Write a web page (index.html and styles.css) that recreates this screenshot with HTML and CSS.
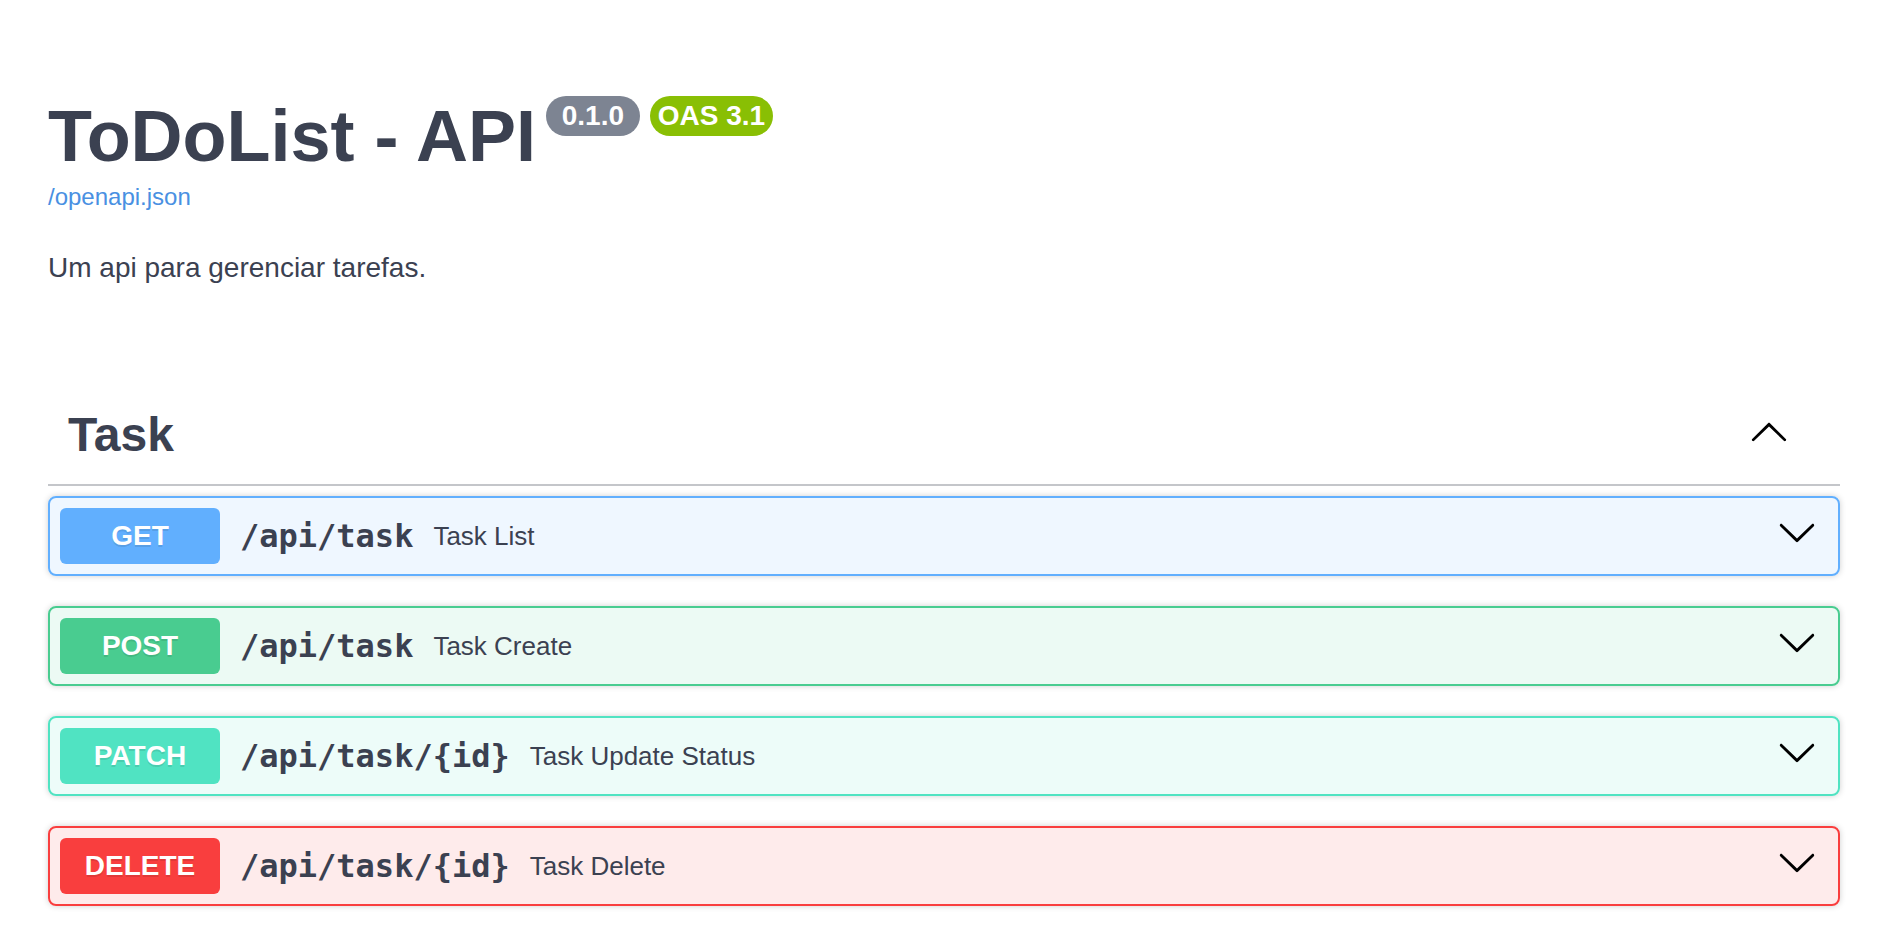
FILE: index.html
```html
<!DOCTYPE html>
<html lang="pt">
<head>
<meta charset="utf-8">
<title>ToDoList - API - Swagger UI</title>
<link rel="stylesheet" href="styles.css">
</head>
<body>
<div class="swagger-ui">
  <div class="wrapper">
    <section class="info">
      <hgroup class="main">
        <h2 class="title">
          <span class="title-text">ToDoList - API</span>
          <small class="badge"><pre class="version"> 0.1.0 </pre></small>
          <small class="badge version-stamp"><pre class="version">OAS 3.1</pre></small>
        </h2>
        <a class="spec-link" href="#">/openapi.json</a>
      </hgroup>
      <div class="description"><p>Um api para gerenciar tarefas.</p></div>
    </section>

    <section class="tag-section">
      <h3 class="opblock-tag">
        <span class="tag-name">Task</span>
        <button class="expand-operation" aria-label="Collapse operation">
          <svg class="arrow" width="40" height="40" viewBox="0 0 20 20" aria-hidden="true"><path d="M17.418 14.908c.272.268.709.268.979 0s.271-.701 0-.969l-7.908-7.83c-.27-.268-.707-.268-.979 0l-7.908 7.83c-.27.268-.27.701 0 .969.271.268.709.268.979 0L10 7.767l7.418 7.141z"/></svg>
        </button>
      </h3>

      <div class="opblock opblock-get">
        <div class="opblock-summary">
          <span class="method">GET</span>
          <span class="path">/api/task</span>
          <span class="summary-desc">Task List</span>
          <button class="arrow-btn" aria-label="Expand"><svg class="arrow" width="40" height="40" viewBox="0 0 20 20" aria-hidden="true"><path d="M17.418 6.109c.272-.268.709-.268.979 0s.271.701 0 .969l-7.908 7.83c-.27.268-.707.268-.979 0l-7.908-7.830c-.27-.268-.27-.701 0-.969.271-.268.709-.268.979 0L10 13.25l7.418-7.141z"/></svg></button>
        </div>
      </div>

      <div class="opblock opblock-post">
        <div class="opblock-summary">
          <span class="method">POST</span>
          <span class="path">/api/task</span>
          <span class="summary-desc">Task Create</span>
          <button class="arrow-btn" aria-label="Expand"><svg class="arrow" width="40" height="40" viewBox="0 0 20 20" aria-hidden="true"><path d="M17.418 6.109c.272-.268.709-.268.979 0s.271.701 0 .969l-7.908 7.83c-.27.268-.707.268-.979 0l-7.908-7.83c-.27-.268-.27-.701 0-.969.271-.268.709-.268.979 0L10 13.25l7.418-7.141z"/></svg></button>
        </div>
      </div>

      <div class="opblock opblock-patch">
        <div class="opblock-summary">
          <span class="method">PATCH</span>
          <span class="path">/api/task/{id}</span>
          <span class="summary-desc">Task Update Status</span>
          <button class="arrow-btn" aria-label="Expand"><svg class="arrow" width="40" height="40" viewBox="0 0 20 20" aria-hidden="true"><path d="M17.418 6.109c.272-.268.709-.268.979 0s.271.701 0 .969l-7.908 7.83c-.27.268-.707.268-.979 0l-7.908-7.83c-.27-.268-.27-.701 0-.969.271-.268.709-.268.979 0L10 13.25l7.418-7.141z"/></svg></button>
        </div>
      </div>

      <div class="opblock opblock-delete">
        <div class="opblock-summary">
          <span class="method">DELETE</span>
          <span class="path">/api/task/{id}</span>
          <span class="summary-desc">Task Delete</span>
          <button class="arrow-btn" aria-label="Expand"><svg class="arrow" width="40" height="40" viewBox="0 0 20 20" aria-hidden="true"><path d="M17.418 6.109c.272-.268.709-.268.979 0s.271.701 0 .969l-7.908 7.83c-.27.268-.707.268-.979 0l-7.908-7.83c-.27-.268-.27-.701 0-.969.271-.268.709-.268.979 0L10 13.25l7.418-7.141z"/></svg></button>
        </div>
      </div>
    </section>
  </div>
</div>
</body>
</html>
```

FILE: styles.css
```css
* {
  box-sizing: border-box;
}

html,
body {
  margin: 0;
  background: #fff;
}

body {
  font-family: "Liberation Sans", Arial, sans-serif;
  color: #3b4151;
}

.wrapper {
  padding: 0 57px 0 48px;
}

/* ---------- info ---------- */
.info {
  padding-top: 95px;
  margin-bottom: 103px;
}

.main {
  margin: 0;
}

.title {
  display: flex;
  align-items: flex-start;
  margin: 0;
  font-size: 72px;
  font-weight: 700;
  line-height: normal;
  color: #3b4151;
}

.badge {
  margin-left: 10px;
  margin-top: 1px;
  padding: 4px 8px;
  border-radius: 57px;
  background: #7d8492;
}

.badge.version-stamp {
  background: #89bf04;
}

.badge .version {
  margin: 0;
  font-family: "Liberation Sans", Arial, sans-serif;
  font-size: 28px;
  font-weight: 700;
  line-height: 32px;
  color: #fff;
}

.spec-link {
  display: block;
  margin-top: 6px;
  font-size: 24px;
  line-height: normal;
  color: #4990e2;
  text-decoration: none;
}

.description p {
  margin: 41px 0 0;
  font-size: 28px;
  line-height: normal;
  color: #3b4151;
}

/* ---------- tag ---------- */
.opblock-tag {
  display: flex;
  align-items: center;
  margin: 0 0 10px;
  padding: 20px 40px 22px 20px;
  border-bottom: 2px solid rgba(59, 65, 81, 0.3);
  font-size: 48px;
  font-weight: 700;
  line-height: normal;
  color: #3b4151;
}

.tag-name {
  flex: 1;
}

.expand-operation,
.arrow-btn {
  display: flex;
  padding: 0;
  margin: 0 11px 8px 0;
  border: none;
  background: none;
  cursor: pointer;
}

.arrow {
  display: block;
  fill: #000;
}

/* ---------- operations ---------- */
.opblock {
  margin: 0 0 30px;
  border: 2px solid #000;
  border-radius: 8px;
  box-shadow: 0 0 6px rgba(0, 0, 0, 0.19);
}

.opblock-summary {
  display: flex;
  align-items: center;
  padding: 10px;
}

.method {
  min-width: 160px;
  padding: 12px 0;
  border-radius: 6px;
  font-size: 28px;
  font-weight: 700;
  line-height: normal;
  text-align: center;
  color: #fff;
  text-shadow: 0 2px 0 rgba(0, 0, 0, 0.1);
}

.path {
  padding: 0 20px;
  font-family: "DejaVu Sans Mono", "Liberation Mono", monospace;
  font-size: 32px;
  font-weight: 700;
  color: #3b4151;
}

.summary-desc {
  flex: 1 1 auto;
  font-size: 26px;
  color: #3b4151;
}

.opblock-get {
  border-color: #61affe;
  background: rgba(97, 175, 254, 0.1);
}
.opblock-get .method {
  background: #61affe;
}

.opblock-post {
  border-color: #49cc90;
  background: rgba(73, 204, 144, 0.1);
}
.opblock-post .method {
  background: #49cc90;
}

.opblock-patch {
  border-color: #50e3c2;
  background: rgba(80, 227, 194, 0.1);
}
.opblock-patch .method {
  background: #50e3c2;
}

.opblock-delete {
  border-color: #f93e3e;
  background: rgba(249, 62, 62, 0.1);
}
.opblock-delete .method {
  background: #f93e3e;
}
```
